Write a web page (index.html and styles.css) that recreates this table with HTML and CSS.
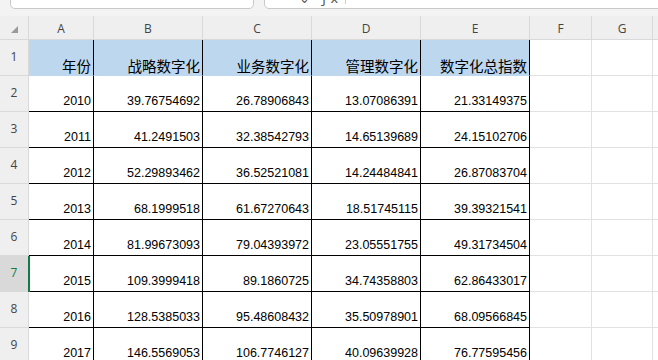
FILE: index.html
```html
<!DOCTYPE html>
<html lang="zh">
<head>
<meta charset="utf-8">
<link rel="stylesheet" href="styles.css">
</head>
<body>
<div class="app">
  <div class="topbar">
    <div class="namebox"></div>
    <div class="formulabox">
      <span class="fx-tools">⌄ ƒx</span>
      <span class="fx-div"></span>
    </div>
  </div>
  <div class="sheet">
    <div class="corner"><span class="tri"></span></div>
    <div class="ch">A</div><div class="ch">B</div><div class="ch">C</div><div class="ch">D</div><div class="ch">E</div><div class="ch">F</div><div class="ch">G</div><div class="ch last"></div>

    <div class="rh">1</div>
    <div class="c hd zh">年份</div><div class="c hd zh">战略数字化</div><div class="c hd zh">业务数字化</div><div class="c hd zh">管理数字化</div><div class="c hd zh">数字化总指数</div>
    <div class="g"></div><div class="g"></div><div class="g last"></div>

    <div class="rh">2</div>
    <div class="c">2010</div><div class="c">39.76754692</div><div class="c">26.78906843</div><div class="c">13.07086391</div><div class="c">21.33149375</div>
    <div class="g"></div><div class="g"></div><div class="g last"></div>

    <div class="rh">3</div>
    <div class="c">2011</div><div class="c">41.2491503</div><div class="c">32.38542793</div><div class="c">14.65139689</div><div class="c">24.15102706</div>
    <div class="g"></div><div class="g"></div><div class="g last"></div>

    <div class="rh">4</div>
    <div class="c">2012</div><div class="c">52.29893462</div><div class="c">36.52521081</div><div class="c">14.24484841</div><div class="c">26.87083704</div>
    <div class="g"></div><div class="g"></div><div class="g last"></div>

    <div class="rh">5</div>
    <div class="c">2013</div><div class="c">68.1999518</div><div class="c">61.67270643</div><div class="c">18.51745115</div><div class="c">39.39321541</div>
    <div class="g"></div><div class="g"></div><div class="g last"></div>

    <div class="rh">6</div>
    <div class="c">2014</div><div class="c">81.99673093</div><div class="c">79.04393972</div><div class="c">23.05551755</div><div class="c">49.31734504</div>
    <div class="g"></div><div class="g"></div><div class="g last"></div>

    <div class="rh sel">7</div>
    <div class="c">2015</div><div class="c">109.3999418</div><div class="c">89.1860725</div><div class="c">34.74358803</div><div class="c">62.86433017</div>
    <div class="g"></div><div class="g"></div><div class="g last"></div>

    <div class="rh">8</div>
    <div class="c">2016</div><div class="c">128.5385033</div><div class="c">95.48608432</div><div class="c">35.50978901</div><div class="c">68.09566845</div>
    <div class="g"></div><div class="g"></div><div class="g last"></div>

    <div class="rh">9</div>
    <div class="c">2017</div><div class="c">146.5569053</div><div class="c">106.7746127</div><div class="c">40.09639928</div><div class="c">76.77595456</div>
    <div class="g"></div><div class="g"></div><div class="g last"></div>
  </div>
</div>
</body>
</html>
```
FILE: styles.css
```css
html, body {
  margin: 0;
  padding: 0;
  background: #ffffff;
  overflow: hidden;
}
.app {
  width: 658px;
  height: 360px;
  overflow: hidden;
  font-family: "Liberation Sans", Arial, sans-serif;
}
.topbar {
  height: 16px;
  background: #f3f3f3;
  display: flex;
  align-items: flex-end;
  gap: 10px;
  padding-left: 10px;
  overflow: hidden;
}
.namebox,
.formulabox {
  height: 30px;
  margin-bottom: 7px;
  background: #ffffff;
  border: 1px solid #c9c9c9;
  border-radius: 5px;
  box-sizing: border-box;
  flex: none;
}
.namebox {
  width: 244px;
}
.formulabox {
  width: 420px;
  position: relative;
}
.fx-tools {
  position: absolute;
  left: 34px;
  bottom: 3px;
  font-size: 13px;
  line-height: 13px;
  color: #555;
  letter-spacing: 4px;
  font-family: "DejaVu Sans", sans-serif;
}
.fx-div {
  position: absolute;
  left: 80px;
  bottom: 4px;
  width: 1px;
  height: 20px;
  background: #d0d0d0;
}
.sheet {
  display: grid;
  grid-template-columns: 29px 65px 109px 109px 109px 109px 62px 61px 1fr;
  grid-template-rows: 24px repeat(9, 36px);
}
.sheet > div {
  box-sizing: border-box;
}
.corner,
.ch {
  background: #efefef;
  border-right: 1px solid #d9d9d9;
  border-bottom: 1px solid #d9d9d9;
}
.corner {
  position: relative;
}
.tri {
  position: absolute;
  left: 11px;
  top: 10px;
  width: 0;
  height: 0;
  border-left: 7px solid transparent;
  border-bottom: 7px solid #9a9a9a;
}
.ch {
  display: flex;
  align-items: center;
  justify-content: center;
  font-family: "Open Sans", "Noto Sans", sans-serif;
  font-size: 12px;
  color: #444;
  padding-top: 1px;
}
.ch.last {
  border-right: none;
}
.rh {
  background: #efefef;
  border-right: 1px solid #d9d9d9;
  border-bottom: 1px solid #d9d9d9;
  display: flex;
  align-items: center;
  justify-content: center;
  font-family: "Open Sans", "Noto Sans", sans-serif;
  font-size: 12px;
  color: #444;
  padding-bottom: 3px;
  position: relative;
}
.rh.sel {
  background: #d9d9d9;
  color: #107c41;
}
.rh.sel::after {
  content: "";
  position: absolute;
  right: -2px;
  top: 0;
  bottom: -1px;
  width: 2px;
  background: #107c41;
}
.c {
  border-right: 1px solid #000;
  border-bottom: 1px solid #000;
  display: flex;
  align-items: flex-end;
  justify-content: flex-end;
  padding: 0 2px 3px 0;
  font-size: 12.5px;
  line-height: 14px;
  color: #000;
  white-space: nowrap;
}
.c.hd {
  background: #bdd7ee;
  border-bottom-color: #bdd7ee;
}
.zh {
  font-family: "Noto Sans CJK SC", "Liberation Sans", sans-serif;
  font-size: 14.5px;
  line-height: 16px;
  padding-bottom: 1px;
}
.g {
  border-right: 1px solid #e1e1e1;
  border-bottom: 1px solid #e1e1e1;
}
.g.last {
  border-right: none;
}
```
